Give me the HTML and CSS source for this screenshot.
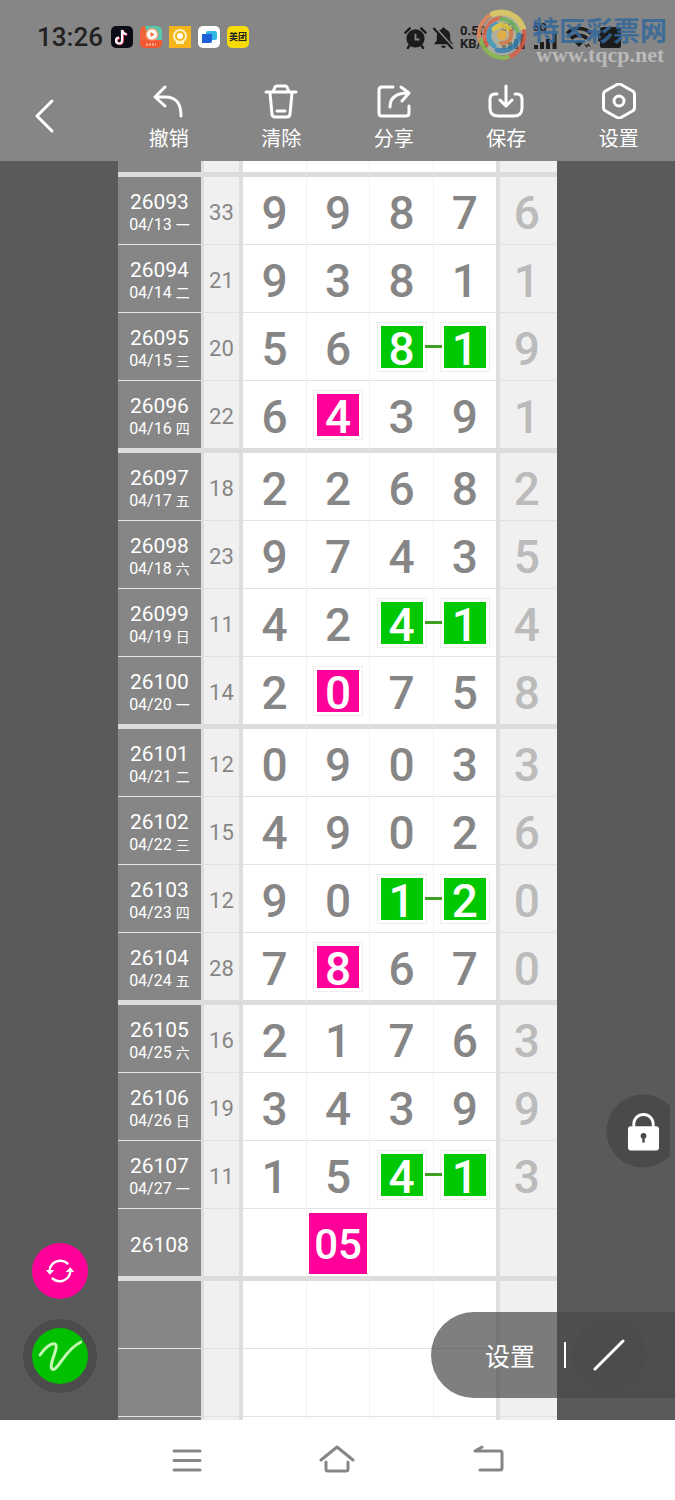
FILE: index.html
```
<!DOCTYPE html>
<html lang="zh-CN">
<head>
    <meta charset="UTF-8">
    <meta name="viewport" content="width=device-width, initial-scale=1.0">
    <title>走势图</title>
    <link rel="stylesheet" href="styles.css">
</head>
<body>
    <header class="header">
        <div class="status-bar">
            <span class="time">13:26</span>
            <div class="apps">
                <svg viewBox="0 0 22 22"><rect width="22" height="22" rx="5" fill="#0b0c16"/><path d="M11 4v10.500a3 3 0 1 1-3-3M11 4c.5 2.500 2 4 4.500 4.200" fill="none" stroke="#f0426a" stroke-width="2.400" transform="translate(.8 .6)"/><path d="M11 4v10.500a3 3 0 1 1-3-3M11 4c.5 2.500 2 4 4.500 4.200" fill="none" stroke="#fff" stroke-width="2.200"/></svg>
                <svg viewBox="0 0 22 22"><rect width="22" height="22" rx="5" fill="#f0633a"/><path d="M5 0h12a5 5 0 0 1 5 5v9H9z" fill="#55c8ae"/><circle cx="12" cy="8.500" r="6.500" fill="#f7a27c"/><circle cx="12" cy="8.500" r="5" fill="#fff"/><path d="M10.500 6l4 2.500-4 2.500z" fill="#ef6a3c"/><path d="M0 14l22 1v2a5 5 0 0 1-5 5H5a5 5 0 0 1-5-5z" fill="#f1582f"/><path d="M6 18.500h10" stroke="#f9b9a4" stroke-width="2" stroke-dasharray="2 1"/></svg>
                <svg viewBox="0 0 22 22"><rect width="22" height="22" fill="#f3b51b"/><circle cx="11" cy="10" r="6" fill="none" stroke="#fff3c0" stroke-width="2"/><circle cx="11" cy="10" r="3" fill="#fff"/><path d="M7 17h8" stroke="#fff3c0" stroke-width="2"/></svg>
                <svg viewBox="0 0 22 22"><rect width="22" height="22" rx="5" fill="#fff"/><rect x="8" y="5" width="11" height="9" rx="2" fill="#31b6e7"/><path d="M4 8h10v7a2 2 0 0 1-2 2H4z" fill="#1b62d8"/></svg>
                <span class="app-meituan">美团</span>
            </div>
            <div class="signals">
                <svg class="sig-icon" viewBox="0 0 24 24"><circle cx="12" cy="13" r="9.500" fill="#1c1c1c"/><path d="M12 8v6h4" fill="none" stroke="#868686" stroke-width="2"/><path d="M1.500 7L6 2.500M22.500 7L18 2.500M6 20l-2 3M18 20l2 3" stroke="#1c1c1c" stroke-width="2.500" stroke-linecap="round"/></svg>
                <svg class="sig-icon" viewBox="0 0 24 24"><path d="M12 1.500a2 2 0 0 1 2 2c3.500 1 5 3.500 5 7V15l3 4H2l3-4v-4.500c0-3.500 1.500-6 5-7a2 2 0 0 1 2-2zM9.500 20.500h5a2.500 2.500 0 0 1-5 0z" fill="#1c1c1c"/><path d="M3 1l20 22" stroke="#868686" stroke-width="2"/><path d="M1.500 2l20 22" stroke="#1c1c1c" stroke-width="2.200"/></svg>
                <span class="speed">0.50<br>KB/s</span>
                <div class="cell-signal"><span>5G</span><svg viewBox="0 0 26 16"><path d="M3 16v-4M9 16V9M15 16V6M21.500 16V1" stroke="#1c1c1c" stroke-width="4"/></svg></div>
                <div class="cell-signal"><span>5G</span><svg viewBox="0 0 26 16"><path d="M3 16v-4M9 16V9M15 16V6M21.500 16V1" stroke="#1c1c1c" stroke-width="4"/></svg></div>
                <svg class="wifi" viewBox="0 0 28 24"><path d="M2 8.500a17 17 0 0 1 24 0M6 13.500a11.500 11.500 0 0 1 16 0" fill="none" stroke="#1c1c1c" stroke-width="3.500"/><path d="M9.500 17.500a6.500 6.500 0 0 1 9 0L14 22zM19 19l3 4 1-5 3 4" fill="#1c1c1c"/></svg>
                <svg class="sig-icon" viewBox="0 0 24 24"><rect x="2" y="1" width="22" height="22" rx="3" fill="#1c1c1c"/><rect y="8" width="3" height="8" fill="#1c1c1c"/></svg>
            </div>
        </div>

        <nav class="toolbar">
            <button class="tool back" aria-label="返回"><svg viewBox="0 0 36 36"><path d="M26 3L11 18l15 15"/></svg></button>
            <button class="tool"><svg viewBox="0 0 36 36"><path d="M14 4L4 14l10 9M5 14h9c11 0 16 6 16 19"/></svg><span>撤销</span></button>
            <button class="tool"><svg viewBox="0 0 36 36"><path d="M3 9h30M10 9l2-5q.5-1 2-1h8q1.500 0 2 1l2 5M7 10l2 21q.3 3 3 3h12q2.700 0 3-3l2-21M14 28h8"/></svg><span>清除</span></button>
            <button class="tool"><svg viewBox="0 0 36 36"><path d="M17 4H6Q3 4 3 7v23q0 3 3 3h24q3 0 3-3v-7M14 24c0-8 4-14 18-14M25 4l8 6-7 8"/></svg><span>分享</span></button>
            <button class="tool"><svg viewBox="0 0 36 36"><path d="M9 11H7q-5 0-5 5v9q0 8 8 8h16q8 0 8-8v-9q0-5-5-5h-2M18 3v20M12 17l6 6 6-6"/></svg><span>保存</span></button>
            <button class="tool"><svg viewBox="0 0 36 36"><path d="M16 1.500q2-1 4 0L31.500 8q2 1 2 3.500v13q0 2.500-2 3.500L20 34.500q-2 1-4 0L4.500 28q-2-1-2-3.500v-13q0-2.500 2-3.500z"/><circle cx="18" cy="18" r="5"/></svg><span>设置</span></button>
        </nav>

        <div class="watermark">
            <svg viewBox="0 0 52 52" fill="none" stroke-linecap="round"><circle cx="26" cy="26" r="20" fill="#d8d8bb" opacity=".6"/><path d="M4 33A23 23 0 0 1 26 3" stroke="#e88a5b" stroke-width="4"/><path d="M17 5a23 23 0 0 1 30 14" stroke="#e4cf63" stroke-width="6"/><path d="M48 22A23 23 0 0 1 29 49" stroke="#dd604b" stroke-width="4"/><path d="M5 31a22 22 0 0 0 27 17" stroke="#8bbf4e" stroke-width="4"/><path d="M11 36a18 18 0 0 1 14-27" stroke="#e36a4e" stroke-width="4"/><path d="M25 10a17 17 0 0 1 17 18" stroke="#74b860" stroke-width="4"/><path d="M43 26a17 17 0 0 1-22 15" stroke="#3e86b8" stroke-width="5"/><path d="M18 37a13 13 0 0 1 2-22" stroke="#479ec0" stroke-width="5"/><path d="M18 20q9-8 16 1" stroke="#e9cf45" stroke-width="5"/><path d="M35 22q2 12-10 12" stroke="#dd8047" stroke-width="4"/><circle cx="26" cy="26" r="5" fill="#efb340"/></svg>
            <div class="watermark-text">
                <strong>特区彩票网</strong>
                <span>www.tqcp.net</span>
            </div>
        </div>
    </header>

    <main class="board">
        <table class="chart">
            <colgroup>
                <col class="col-date"><col class="col-sum"><col class="col-num"><col class="col-num"><col class="col-num"><col class="col-num-last"><col class="col-extra">
            </colgroup>
            <tbody>
                <tr class="cut thick"><th></th><td></td><td></td><td></td><td></td><td></td><td></td></tr>
                <tr><th>26093<small>04/13 <i>一</i></small></th><td>33</td><td>9</td><td>9</td><td>8</td><td>7</td><td>6</td></tr>
                <tr><th>26094<small>04/14 <i>二</i></small></th><td>21</td><td>9</td><td>3</td><td>8</td><td>1</td><td>1</td></tr>
                <tr><th>26095<small>04/15 <i>三</i></small></th><td>20</td><td>5</td><td>6</td><td class="linked"><b class="mark green">8</b></td><td><b class="mark green">1</b></td><td>9</td></tr>
                <tr class="thick"><th>26096<small>04/16 <i>四</i></small></th><td>22</td><td>6</td><td><b class="mark pink">4</b></td><td>3</td><td>9</td><td>1</td></tr>
                <tr><th>26097<small>04/17 <i>五</i></small></th><td>18</td><td>2</td><td>2</td><td>6</td><td>8</td><td>2</td></tr>
                <tr><th>26098<small>04/18 <i>六</i></small></th><td>23</td><td>9</td><td>7</td><td>4</td><td>3</td><td>5</td></tr>
                <tr><th>26099<small>04/19 <i>日</i></small></th><td>11</td><td>4</td><td>2</td><td class="linked"><b class="mark green">4</b></td><td><b class="mark green">1</b></td><td>4</td></tr>
                <tr class="thick"><th>26100<small>04/20 <i>一</i></small></th><td>14</td><td>2</td><td><b class="mark pink">0</b></td><td>7</td><td>5</td><td>8</td></tr>
                <tr><th>26101<small>04/21 <i>二</i></small></th><td>12</td><td>0</td><td>9</td><td>0</td><td>3</td><td>3</td></tr>
                <tr><th>26102<small>04/22 <i>三</i></small></th><td>15</td><td>4</td><td>9</td><td>0</td><td>2</td><td>6</td></tr>
                <tr><th>26103<small>04/23 <i>四</i></small></th><td>12</td><td>9</td><td>0</td><td class="linked"><b class="mark green">1</b></td><td><b class="mark green">2</b></td><td>0</td></tr>
                <tr class="thick"><th>26104<small>04/24 <i>五</i></small></th><td>28</td><td>7</td><td><b class="mark pink">8</b></td><td>6</td><td>7</td><td>0</td></tr>
                <tr><th>26105<small>04/25 <i>六</i></small></th><td>16</td><td>2</td><td>1</td><td>7</td><td>6</td><td>3</td></tr>
                <tr><th>26106<small>04/26 <i>日</i></small></th><td>19</td><td>3</td><td>4</td><td>3</td><td>9</td><td>9</td></tr>
                <tr><th>26107<small>04/27 <i>一</i></small></th><td>11</td><td>1</td><td>5</td><td class="linked"><b class="mark green">4</b></td><td><b class="mark green">1</b></td><td>3</td></tr>
                <tr class="thick"><th>26108</th><td></td><td></td><td class="pick"><b>05</b></td><td></td><td></td><td></td></tr>
                <tr><th></th><td></td><td></td><td></td><td></td><td></td><td></td></tr>
                <tr><th></th><td></td><td></td><td></td><td></td><td></td><td></td></tr>
                <tr><th></th><td></td><td></td><td></td><td></td><td></td><td></td></tr>
            </tbody>
        </table>

        <button class="lock" aria-label="锁定">
            <svg viewBox="0 0 34 40"><path d="M7 18V13a10 10 0 0 1 20 0v5" fill="none" stroke="#fff" stroke-width="3"/><rect x="1" y="15" width="32" height="25" rx="3" fill="#fff"/><circle cx="17" cy="25" r="3" fill="#4a4a4a"/><path d="M17 25v7" stroke="#4a4a4a" stroke-width="2.500"/></svg>
        </button>

        <div class="side-tools">
            <button class="round swap" aria-label="切换"><svg viewBox="0 0 32 32"><path d="M5 15A11.500 11.500 0 0 1 24 8M27 17A11.500 11.500 0 0 1 8 24" fill="none" stroke="#fff" stroke-width="2.500" stroke-linecap="round"/><path d="M1 15h9l-5 5zM31 17h-9l5-5z" fill="#fff"/></svg></button>
            <button class="round pen" aria-label="画笔"><svg viewBox="0 0 44 32" fill="none" stroke="#c4f7b4" stroke-width="3" stroke-linecap="round" stroke-linejoin="round"><path d="M2 15C7 8 13 3 17 4c5 2-7 21-3 25 5 4 13-20 29-27"/></svg></button>
        </div>

        <div class="line-panel">
            <button class="panel-set">设置</button>
            <span class="divider"></span>
            <button class="panel-line" aria-label="直线"><svg viewBox="0 0 32 32"><path d="M2 30L30 2" stroke="#fff" stroke-width="3" stroke-linecap="round"/></svg></button>
        </div>
    </main>

    <footer class="nav-bar">
        <button aria-label="菜单"><svg viewBox="0 0 36 30"><path d="M5 6h26M5 15.500h26M5 25h26"/></svg></button>
        <button aria-label="主页"><svg viewBox="0 0 36 30"><path d="M2 15L18 2l16 13M7 17v7q0 2 2 2h18q2 0 2-2v-7"/></svg></button>
        <button aria-label="后退"><svg viewBox="0 0 36 30"><path d="M12 2L5 6h25q2 0 2 2v15q0 2-2 2H10"/></svg></button>
    </footer>
</body>
</html>
```
FILE: styles.css
```
* {
    margin: 0;
    padding: 0;
    box-sizing: border-box;
}

body {
    display: flex;
    flex-direction: column;
    height: 100vh;
    font-family: Roboto, "Noto Sans CJK SC", sans-serif;
    background: #fff;
    overflow: hidden;
}

button {
    border: none;
    background: none;
    color: #fff;
    font-family: inherit;
    cursor: pointer;
}

svg {
    display: block;
}

/* header */
.header {
    position: relative;
    background: #868686;
}

.status-bar {
    display: flex;
    align-items: center;
    height: 74px;
    padding: 0 54px 0 37px;
}

.time {
    font-size: 26px;
    font-weight: 500;
    color: #222;
}

.apps {
    display: flex;
    gap: 7px;
    margin-left: 8px;
}

.apps svg,
.app-meituan {
    width: 22px;
    height: 22px;
}

.app-meituan {
    border-radius: 5px;
    background: #f8dc0a;
    color: #222;
    font-size: 9px;
    font-weight: 700;
    line-height: 22px;
    text-align: center;
}

.signals {
    display: flex;
    align-items: center;
    gap: 5px;
    margin-left: auto;
}

.sig-icon {
    width: 23px;
    height: 23px;
}

.speed {
    width: 36px;
    font-size: 13px;
    font-weight: 700;
    line-height: 13px;
    color: #1c1c1c;
}

.cell-signal {
    position: relative;
    width: 27px;
    padding-top: 8px;
}

.cell-signal span {
    position: absolute;
    top: -4px;
    left: 0;
    font-size: 11px;
    font-weight: 700;
    color: #1c1c1c;
}

.cell-signal svg {
    width: 26px;
    height: 16px;
}

.wifi {
    width: 28px;
    height: 24px;
}

.toolbar {
    display: grid;
    grid-template-columns: repeat(6, 1fr);
    height: 87px;
}

.tool {
    display: flex;
    flex-direction: column;
    align-items: center;
    padding-top: 9px;
    font-size: 20px;
    line-height: 30px;
}

.tool svg {
    width: 36px;
    height: 36px;
    fill: none;
    stroke: #fff;
    stroke-width: 3;
    stroke-linecap: round;
    stroke-linejoin: round;
}

.back {
    padding: 24px 24px 0 0;
}

.tool span {
    margin-top: 5px;
}

.watermark {
    position: absolute;
    top: 9px;
    right: 8px;
    display: flex;
    gap: 4px;
    opacity: 0.85;
}

.watermark svg {
    width: 52px;
    height: 52px;
}

.watermark-text {
    display: flex;
    flex-direction: column;
}

.watermark strong {
    font-size: 27px;
    line-height: 40px;
    margin-top: 3px;
    color: #33689b;
}

.watermark span {
    margin-top: -9px;
    padding-left: 4px;
    font-family: "Liberation Serif", serif;
    font-size: 22px;
    font-weight: 700;
    line-height: 24px;
    color: #c4c4c4;
}

/* chart */
.board {
    position: relative;
    flex: 1;
    min-height: 0;
    overflow: hidden;
    background: #5a5a5a;
}

.chart {
    width: 65%;
    margin: 0 auto;
    table-layout: fixed;
    border-collapse: separate;
    border-spacing: 0;
    background: #fff;
}

.col-date { width: 19.5%; }
.col-sum { width: 9%; }
.col-num { width: 14.5%; }
.col-num-last { width: 15%; }
.col-extra { width: 13%; }

.chart tr {
    height: 68px;
}

.chart tr.thick {
    height: 72px;
}

.chart tr.cut {
    height: 16px;
}

.chart th,
.chart td {
    border-bottom: 1px solid #e2e2e2;
    text-align: center;
    vertical-align: middle;
}

.chart .thick th,
.chart .thick td {
    border-bottom: 5px solid #dcdcdc;
}

.chart th {
    padding-top: 4px;
    border-right: 3px solid #dedede;
    background: #868686;
    color: #fff;
    font-size: 21px;
    font-weight: 400;
    line-height: 24px;
}

.chart small {
    display: block;
    font-size: 16px;
    line-height: 22px;
}

.chart i {
    font-size: 14px;
    font-style: normal;
}

.chart td {
    position: relative;
    padding-top: 4px;
    border-right: 1px solid #f3f3f3;
    color: #868686;
    font-size: 46px;
    font-weight: 500;
    line-height: 46px;
}

.chart td:nth-child(2) {
    border-right: 4px solid #dedede;
    background: #f0f0f0;
    font-size: 22px;
    font-weight: 400;
}

.chart td:nth-child(6) {
    border-right: 4px solid #dedede;
}

.chart td:nth-child(7) {
    padding-right: 3px;
    border-right: none;
    background: #f0f0f0;
    color: #bbb;
}

.chart .cut th,
.chart .cut td {
    padding: 0;
    line-height: 10px;
}

.mark {
    display: block;
    width: 42px;
    height: 42px;
    margin: -4px auto 0;
    padding-top: 2px;
    color: #fff;
    font-weight: 500;
    line-height: 42px;
    box-shadow: 0 0 0 3px #fff, 0 0 0 4px #eee;
}

.green {
    background: #00c800;
}

.pink {
    background: #ff0099;
}

.linked::after {
    content: "";
    position: absolute;
    z-index: 1;
    top: 32px;
    right: -9px;
    width: 17px;
    height: 3px;
    background: #42a020;
}

.chart .pick {
    padding: 4px 2px 2px;
}

.pick b {
    display: block;
    padding-top: 2px;
    background: #ff0099;
    color: #fff;
    font-size: 42px;
    font-weight: 500;
    line-height: 59px;
}

/* floating controls */
.lock {
    position: absolute;
    right: 5px;
    bottom: 252px;
    width: 64px;
    height: 74px;
    padding-left: 21px;
    background: radial-gradient(circle at 37px 37px, #4a4a4a 36px, transparent 37px);
}

.lock svg {
    width: 33px;
    height: 40px;
}

.side-tools {
    position: absolute;
    left: 32px;
    bottom: 36px;
    display: flex;
    flex-direction: column;
    gap: 29px;
}

.round {
    display: flex;
    align-items: center;
    justify-content: center;
    width: 56px;
    height: 56px;
    border-radius: 50%;
}

.swap {
    background: #ff0099;
}

.swap svg {
    width: 30px;
    height: 30px;
}

.pen {
    background: #00c000;
    box-shadow: 0 0 0 9px #4c4c4c;
}

.pen svg {
    width: 44px;
    height: 32px;
}

.line-panel {
    position: absolute;
    right: 0;
    bottom: 22px;
    display: flex;
    align-items: center;
    width: 244px;
    height: 86px;
    padding-left: 54px;
    border-radius: 43px 0 0 43px;
    background: rgba(72, 72, 72, 0.7);
}

.panel-set {
    font-size: 25px;
}

.divider {
    width: 2px;
    height: 26px;
    margin-left: 29px;
    background: #fff;
}

.panel-line {
    display: flex;
    align-items: center;
    justify-content: center;
    width: 74px;
    height: 74px;
    margin-left: 6px;
    border-radius: 50%;
    background: rgba(74, 74, 74, 0.3);
}

.panel-line svg {
    width: 32px;
    height: 32px;
}

/* system navigation */
.nav-bar {
    display: grid;
    grid-template-columns: repeat(3, 1fr);
    height: 80px;
    padding: 0 112px;
    background: #fff;
}

.nav-bar button {
    display: flex;
    align-items: center;
    justify-content: center;
}

.nav-bar svg {
    width: 36px;
    height: 30px;
    fill: none;
    stroke: #868686;
    stroke-width: 3;
    stroke-linecap: round;
    stroke-linejoin: round;
}
```
